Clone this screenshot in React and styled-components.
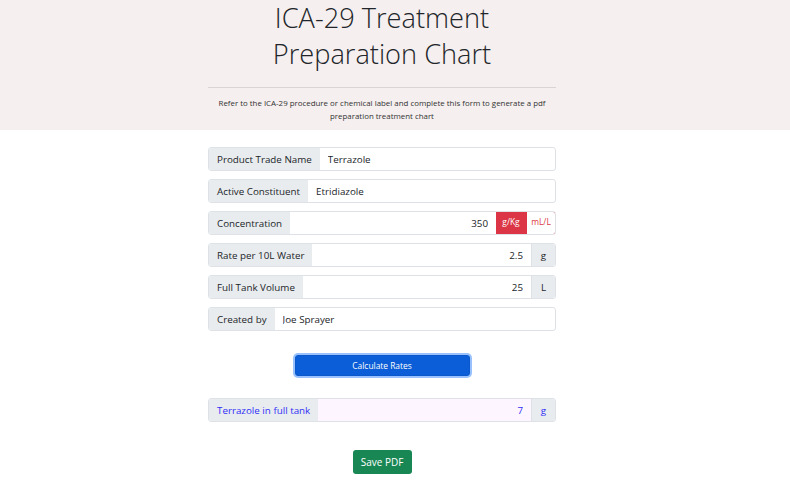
import React from "react";
import styled, { createGlobalStyle } from "styled-components";

const GlobalStyle = createGlobalStyle`
  body {
    margin: 0;
    background: #fff;
    font-family: "Open Sans", "Noto Sans", sans-serif;
    color: #212529;
  }
`;

const Header = styled.header`
  background: #f5efef;
  padding: 0 26px 7px 0;
`;

const Column = styled.div`
  width: 348px;
  margin: 0 auto;
`;

const Title = styled.h1`
  margin: 0;
  font-weight: 300;
  font-size: 27.2px;
  line-height: 36px;
  text-align: center;
  color: #212529;
`;

const Rule = styled.hr`
  border: 0;
  border-top: 1px solid #d8d4d4;
  margin: 15px 0 0;
`;

const Intro = styled.p`
  margin: 9px 0 0;
  font-size: 7.9px;
  line-height: 13px;
  text-align: center;
  color: #333;
`;

const Main = styled.main`
  padding: 17px 26px 0 0;
`;

const Form = styled.div`
  display: flex;
  flex-direction: column;
  gap: 8px;
`;

const Group = styled.div`
  display: flex;
  height: 24px;
  border: 1px solid #dee2e6;
  border-radius: 3px;
  box-sizing: border-box;
  overflow: hidden;
  font-size: 9.8px;
  background: ${(p) => (p.$result ? "#fdf5ff" : "#fff")};
`;

const Addon = styled.span`
  display: flex;
  align-items: center;
  padding: 0 8px;
  background: #e9ecef;
  color: ${(p) => (p.$result ? "#2f2ff6" : "#212529")};
  white-space: nowrap;
`;

const Field = styled.input`
  flex: 1;
  min-width: 0;
  border: 0;
  background: transparent;
  padding: 0 8px;
  font: inherit;
  color: ${(p) => (p.$result ? "#2f2ff6" : "#212529")};
  text-align: ${(p) => (p.$number ? "right" : "left")};
  outline: none;
`;

const Unit = styled.span`
  display: flex;
  align-items: center;
  justify-content: center;
  width: 23px;
  background: #e9ecef;
  border-left: 1px solid #dee2e6;
  color: ${(p) => (p.$result ? "#2f2ff6" : "#212529")};
`;

const Toggle = styled.button`
  width: 30px;
  border: 1px solid #dc3545;
  margin: -1px 0;
  background: ${(p) => (p.$active ? "#dc3545" : "#fff")};
  color: ${(p) => (p.$active ? "#fff" : "#dc3545")};
  font: inherit;
  font-size: 8.4px;
  padding: 0 0 4px;
  &:last-child {
    margin-right: -1px;
    border-radius: 0 3px 3px 0;
  }
`;

const Center = styled.div`
  display: flex;
  justify-content: center;
  padding: ${(p) => p.$pad};
`;

const CalcButton = styled.button`
  width: 175px;
  height: 21px;
  border: 1px solid #0a58ca;
  border-radius: 3px;
  background: #0b5ed7;
  color: #fff;
  font: inherit;
  font-size: 8.4px;
  box-shadow: 0 0 0 2px rgba(49, 132, 253, 0.5);
`;

const SaveButton = styled.button`
  width: 59px;
  height: 24px;
  border: 0;
  border-radius: 3px;
  background: #198754;
  color: #fff;
  font: inherit;
  font-size: 10px;
`;

const rows = [
  { label: "Product Trade Name", value: "Terrazole" },
  { label: "Active Constituent", value: "Etridiazole" },
];

export default function App() {
  return (
    <>
      <GlobalStyle />
      <Header>
        <Column>
          <Title>
            ICA-29 Treatment
            <br />
            Preparation Chart
          </Title>
          <Rule />
          <Intro>
            Refer to the ICA-29 procedure or chemical label and complete this
            form to generate a pdf preparation treatment chart
          </Intro>
        </Column>
      </Header>
      <Main>
        <Column>
          <Form>
            {rows.map((r) => (
              <Group key={r.label}>
                <Addon>{r.label}</Addon>
                <Field defaultValue={r.value} />
              </Group>
            ))}
            <Group>
              <Addon>Concentration</Addon>
              <Field $number defaultValue="350" />
              <Toggle $active>g/Kg</Toggle>
              <Toggle>mL/L</Toggle>
            </Group>
            <Group>
              <Addon>Rate per 10L Water</Addon>
              <Field $number defaultValue="2.5" />
              <Unit>g</Unit>
            </Group>
            <Group>
              <Addon>Full Tank Volume</Addon>
              <Field $number defaultValue="25" />
              <Unit>L</Unit>
            </Group>
            <Group>
              <Addon>Created by</Addon>
              <Field defaultValue="Joe Sprayer" />
            </Group>
          </Form>
          <Center $pad="24px 0 22px">
            <CalcButton>Calculate Rates</CalcButton>
          </Center>
          <Group $result>
            <Addon $result>Terrazole in full tank</Addon>
            <Field $number $result readOnly defaultValue="7" />
            <Unit $result>g</Unit>
          </Group>
          <Center $pad="28px 0 0">
            <SaveButton>Save PDF</SaveButton>
          </Center>
        </Column>
      </Main>
    </>
  );
}
